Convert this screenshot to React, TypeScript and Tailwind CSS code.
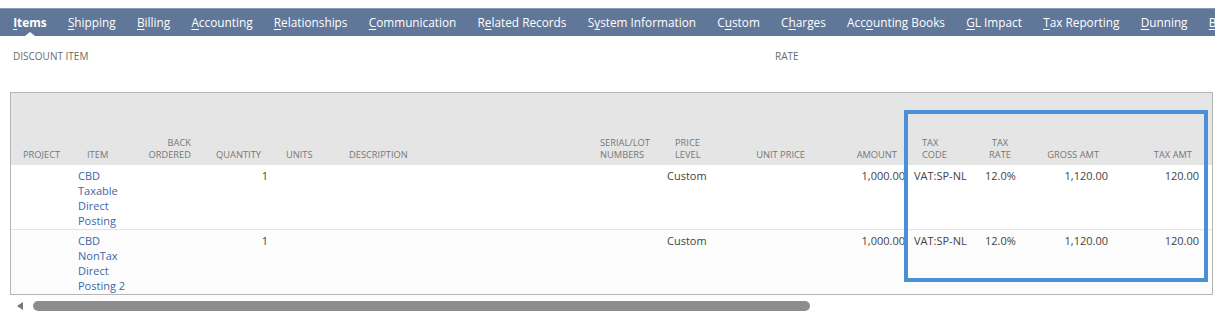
const TABS: [string, string, string][] = [
  ['', 'I', 'tems'],
  ['', 'S', 'hipping'],
  ['', 'B', 'illing'],
  ['', 'A', 'ccounting'],
  ['', 'R', 'elationships'],
  ['', 'C', 'ommunication'],
  ['R', 'e', 'lated Records'],
  ['S', 'y', 'stem Information'],
  ['C', 'u', 'stom'],
  ['C', 'h', 'arges'],
  ['Acc', 'o', 'unting Books'],
  ['', 'G', 'L Impact'],
  ['', 'T', 'ax Reporting'],
  ['', 'D', 'unning'],
  ['', 'B', ''],
]

type Col = { key: string; label: string[]; w: string; head: string; cell: string }

const COLS: Col[] = [
  { key: 'project', label: ['PROJECT'], w: 'w-[63px]', head: 'text-left pl-[12px]', cell: 'text-left pl-[4px]' },
  { key: 'item', label: ['ITEM'], w: 'w-[66px]', head: 'text-left pl-[13px]', cell: 'text-left pl-[4px]' },
  { key: 'back', label: ['BACK', 'ORDERED'], w: 'w-[63px]', head: 'text-right pr-[12px]', cell: 'text-right pr-[4px]' },
  { key: 'qty', label: ['QUANTITY'], w: 'w-[70px]', head: 'text-right pr-[12px]', cell: 'text-right pr-[5px]' },
  { key: 'units', label: ['UNITS'], w: 'w-[64px]', head: 'text-left pl-[13px]', cell: 'text-left pl-[4px]' },
  { key: 'desc', label: ['DESCRIPTION'], w: 'w-[251px]', head: 'text-left pl-[12px]', cell: 'text-left pl-[4px]' },
  { key: 'serial', label: ['SERIAL/LOT', 'NUMBERS'], w: 'w-[75px]', head: 'text-left pl-[12px]', cell: 'text-left pl-[4px]' },
  { key: 'price', label: ['PRICE', 'LEVEL'], w: 'w-[57px]', head: 'text-left pl-[12px]', cell: 'text-left pl-[4px]' },
  { key: 'unit', label: ['UNIT PRICE'], w: 'w-[97px]', head: 'text-right pr-[12px]', cell: 'text-right pr-[4px]' },
  { key: 'amount', label: ['AMOUNT'], w: 'w-[92px]', head: 'text-right pr-[12px]', cell: 'text-right pr-[4px]' },
  { key: 'taxcode', label: ['TAX', 'CODE'], w: 'w-[71px]', head: 'text-left pl-[13px]', cell: 'text-left pl-[5px]' },
  { key: 'taxrate', label: ['TAX', 'RATE'], w: 'w-[40px]', head: 'text-center pl-[0px]', cell: 'text-left pl-[5px]' },
  { key: 'gross', label: ['GROSS AMT'], w: 'w-[91px]', head: 'text-right pr-[12px]', cell: 'text-right pr-[3px]' },
  { key: 'taxamt', label: ['TAX AMT'], w: 'w-[93px]', head: 'text-right pr-[12px]', cell: 'text-right pr-[5px]' },
]

const ROWS: Record<string, string[] | string>[] = [
  { item: ['CBD', 'Taxable', 'Direct', 'Posting'], qty: '1', price: 'Custom', amount: '1,000.00', taxcode: 'VAT:SP-NL', taxrate: '12.0%', gross: '1,120.00', taxamt: '120.00' },
  { item: ['CBD', 'NonTax', 'Direct', 'Posting 2'], qty: '1', price: 'Custom', amount: '1,000.00', taxcode: 'VAT:SP-NL', taxrate: '12.0%', gross: '1,120.00', taxamt: '120.00' },
]

export default function App() {
  return (
    <div className="w-[1219px] h-[324px] bg-white overflow-hidden pt-[8px] font-['Open_Sans',sans-serif]">
      {/* tab strip */}
      <div className="w-[1215px] h-[28px] bg-[#607799] border-t border-[#8a9bb7] flex items-center pl-[2.5px] overflow-hidden whitespace-nowrap">
        {TABS.map(([a, u, b], i) => (
          <div key={i} className={`relative h-full flex items-center pt-[1px] px-[10.65px] text-[11.8px] text-white shrink-0 ${i === 0 ? 'font-bold' : ''}`}>
            <span>{a}<span className="underline underline-offset-2 decoration-1">{u}</span>{b}</span>
            {i === 0 && (
              <span className="absolute bottom-0 left-1/2 -translate-x-1/2 w-0 h-0 border-l-[5px] border-r-[5px] border-b-[4px] border-l-transparent border-r-transparent border-b-white" />
            )}
          </div>
        ))}
      </div>

      {/* header fields */}
      <div className="flex mt-[13px] h-[14px] text-[10px] leading-[14px] text-[#6b6b6b] uppercase">
        <div className="pl-[13px] w-[775px]">Discount Item</div>
        <div>Rate</div>
      </div>

      {/* sublist */}
      <div className="relative ml-[10px] mt-[29px] w-[1203px] border border-[#b5b5b5]">
        <table className="table-fixed border-collapse w-full">
          <colgroup>
            {COLS.map(c => <col key={c.key} className={c.w} />)}
            <col />
          </colgroup>
          <thead>
            <tr className="bg-[#e5e5e5] h-[72px]">
              {COLS.map(c => (
                <th key={c.key} className={`align-bottom pb-[4px] font-normal text-[9.3px] leading-[12px] text-[#777] ${c.head}`}>
                  {c.label.map((l, i) => <div key={i}>{l}</div>)}
                </th>
              ))}
              <th />
            </tr>
          </thead>
          <tbody>
            {ROWS.map((r, ri) => (
              <tr key={ri} className={ri === 0 ? 'h-[64px] bg-white border-b border-[#e3e3e3]' : 'h-[65px] bg-[#fcfcfc]'}>
                {COLS.map(c => {
                  const v = r[c.key]
                  return (
                    <td key={c.key} className={`align-top pt-[3px] text-[11px] leading-[15px] whitespace-nowrap ${c.key === 'item' ? 'text-[#3d66a8]' : 'text-[#444]'} ${c.cell}`}>
                      {Array.isArray(v) ? v.map((l, i) => <div key={i}>{l}</div>) : v}
                    </td>
                  )
                })}
                <td />
              </tr>
            ))}
          </tbody>
        </table>

        {/* highlight box */}
        <div className="absolute left-[893px] top-[17px] w-[304px] h-[172px] border-[4px] border-[#4a90d9]" />
      </div>

      {/* horizontal scrollbar */}
      <div className="flex items-center ml-[17px] mt-[6px] h-[10px]">
        <div className="w-0 h-0 border-t-[4px] border-b-[4px] border-r-[6px] border-t-transparent border-b-transparent border-r-[#777]" />
        <div className="ml-[10px] w-[777px] h-[10px] rounded-full bg-[#8d8d8d]" />
      </div>
    </div>
  )
}
